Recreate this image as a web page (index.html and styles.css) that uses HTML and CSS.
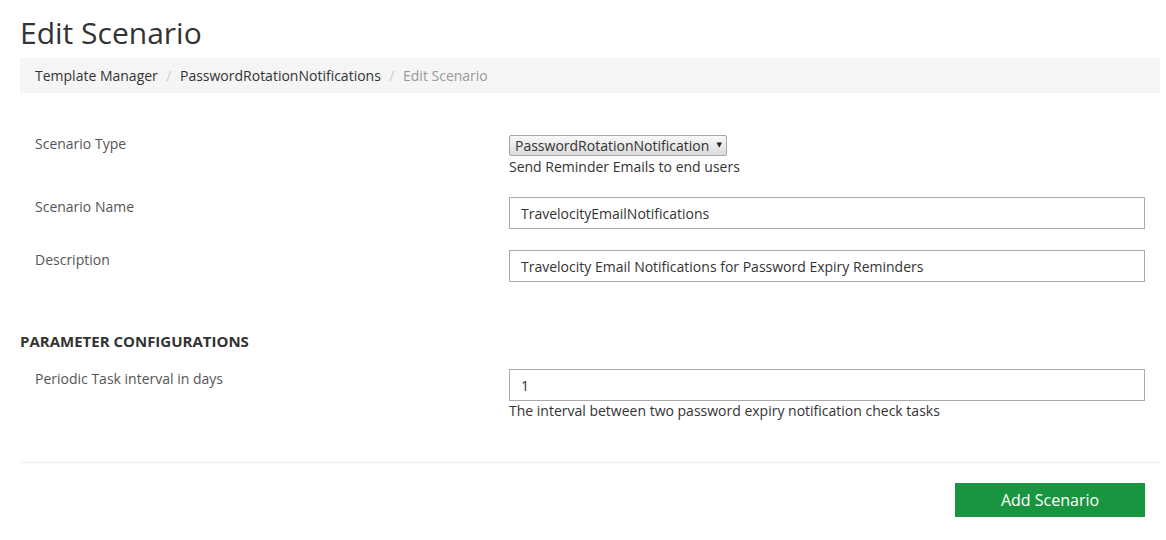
FILE: index.html
```html
<!DOCTYPE html>
<html>
<head>
<meta charset="utf-8">
<link rel="stylesheet" href="styles.css">
</head>
<body>
<div class="page">
  <h1 class="title">Edit Scenario</h1>
  <nav class="crumbs">
    <span class="crumb">Template Manager</span>
    <span class="sep">/</span>
    <span class="crumb">PasswordRotationNotifications</span>
    <span class="sep">/</span>
    <span class="crumb active">Edit Scenario</span>
  </nav>

  <div class="form">
    <div class="row">
      <div class="label">Scenario Type</div>
      <div class="control">
        <div class="select"><span>PasswordRotationNotification</span><span class="arrow">▼</span></div>
        <div class="help help-tight">Send Reminder Emails to end users</div>
      </div>
    </div>
    <div class="row">
      <div class="label">Scenario Name</div>
      <div class="control">
        <div class="input">TravelocityEmailNotifications</div>
      </div>
    </div>
    <div class="row">
      <div class="label">Description</div>
      <div class="control">
        <div class="input">Travelocity Email Notifications for Password Expiry Reminders</div>
      </div>
    </div>
  </div>

  <h4 class="section">PARAMETER CONFIGURATIONS</h4>
  <div class="form">
    <div class="row">
      <div class="label">Periodic Task interval in days</div>
      <div class="control">
        <div class="input">1</div>
        <div class="help">The interval between two password expiry notification check tasks</div>
      </div>
    </div>
  </div>

  <hr class="rule">
  <div class="actions">
    <button class="btn">Add Scenario</button>
  </div>
</div>
</body>
</html>
```

FILE: styles.css
```css
* { box-sizing: border-box; }
html, body { margin: 0; background: #fff; }
body {
  font-family: "Open Sans", "DejaVu Sans", sans-serif;
  font-size: 14px;
  line-height: 20px;
  color: #333;
}
.page {
  width: 1140px;
  margin-left: 20px;
}
.title {
  margin: 16px 0 9px;
  font-size: 30px;
  font-weight: 400;
  line-height: 33px;
  color: #333;
}
.crumbs {
  display: flex;
  align-items: center;
  height: 35px;
  padding: 1px 15px 0;
  background: #f5f5f5;
  color: #333;
}
.sep {
  color: #ccc;
  padding: 0 8.5px;
}
.crumb.active { color: #999; }

.form {
  padding: 0 15px 0 15px;
}
.crumbs + .form { margin-top: 41px; }
.row {
  display: flex;
  margin-bottom: 21px;
}
.label {
  width: 474px;
  color: #555;
  padding-top: 0;
}
.control {
  width: 636px;
}
.select {
  display: inline-flex;
  align-items: center;
  justify-content: space-between;
  width: 218px;
  height: 21px;
  margin-top: 1px;
  padding: 0 4px 0 5px;
  border: 1px solid #a6a6a6;
  border-radius: 2px;
  background: linear-gradient(#f8f8f8, #dcdcdc);
  color: #333;
  font-size: 14px;
}
.arrow {
  font-size: 7px;
  color: #222;
  line-height: 1;
  margin-top: -3px;
}
.help {
  color: #333;
}
.help-tight {
  margin-top: 1px;
  margin-bottom: -1px;
}
.input {
  height: 32px;
  border: 1px solid #aaa;
  padding: 6px 11px 0;
  color: #333;
  background: #fff;
}
.section {
  margin: 49px 0 18px;
  font-size: 15px;
  font-weight: 700;
  line-height: 20px;
  color: #333;
}
.section + .form .row { margin-bottom: 0; }
.rule {
  margin: 41px 0 0;
  border: 0;
  border-top: 1px solid #eee;
}
.actions {
  display: flex;
  justify-content: flex-end;
  padding: 20px 15px 0 0;
}
.btn {
  width: 190px;
  height: 34px;
  border: 0;
  border-radius: 0;
  background: #1a953f;
  color: #fff;
  font-family: "Open Sans", "DejaVu Sans", sans-serif;
  font-size: 16px;
  line-height: 20px;
  padding: 0;
}
```
